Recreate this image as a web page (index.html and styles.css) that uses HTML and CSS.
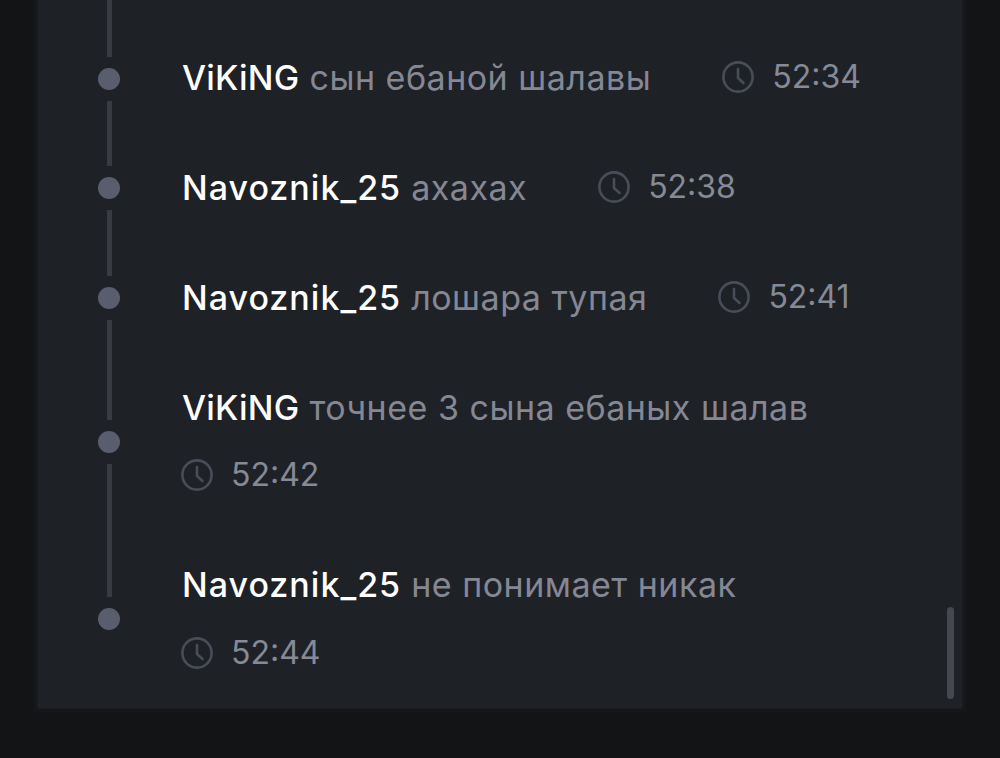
FILE: index.html
```html
<!DOCTYPE html>
<html lang="en">
<head>
    <meta charset="UTF-8">
    <meta name="viewport" content="width=device-width, initial-scale=1.0">
    <title>Chat log</title>
    <link rel="stylesheet" href="styles.css">
</head>
<body>
    <div class="panel">
        <div class="row row-first">
            <div class="marker"><span class="line"></span><span class="dot"></span><span class="line"></span></div>
            <div class="body">
                <div class="msg"><span class="name name-short">ViKiNG</span> сын ебаной шалавы</div>
                <div class="time time-inline">
                    <svg class="clock" viewBox="0 0 32 32"><circle cx="16" cy="16" r="14.6"/><path d="M16 8v9l5.5 5"/></svg>
                    <span>52:34</span>
                </div>
            </div>
        </div>
        <div class="row">
            <div class="marker"><span class="line"></span><span class="dot"></span><span class="line"></span></div>
            <div class="body">
                <div class="msg"><span class="name">Navoznik_25</span> ахахах</div>
                <div class="time time-inline">
                    <svg class="clock" viewBox="0 0 32 32"><circle cx="16" cy="16" r="14.6"/><path d="M16 8v9l5.5 5"/></svg>
                    <span>52:38</span>
                </div>
            </div>
        </div>
        <div class="row">
            <div class="marker"><span class="line"></span><span class="dot"></span><span class="line"></span></div>
            <div class="body">
                <div class="msg"><span class="name">Navoznik_25</span> лошара тупая</div>
                <div class="time time-inline">
                    <svg class="clock" viewBox="0 0 32 32"><circle cx="16" cy="16" r="14.6"/><path d="M16 8v9l5.5 5"/></svg>
                    <span>52:41</span>
                </div>
            </div>
        </div>
        <div class="row">
            <div class="marker"><span class="line"></span><span class="dot"></span><span class="line"></span></div>
            <div class="body">
                <div class="msg"><span class="name name-short">ViKiNG</span> точнее 3 сына ебаных шалав</div>
                <div class="time">
                    <svg class="clock" viewBox="0 0 32 32"><circle cx="16" cy="16" r="14.6"/><path d="M16 8v9l5.5 5"/></svg>
                    <span>52:42</span>
                </div>
            </div>
        </div>
        <div class="row row-last">
            <div class="marker"><span class="line"></span><span class="dot"></span><span class="line"></span></div>
            <div class="body">
                <div class="msg"><span class="name">Navoznik_25</span> не понимает никак</div>
                <div class="time">
                    <svg class="clock" viewBox="0 0 32 32"><circle cx="16" cy="16" r="14.6"/><path d="M16 8v9l5.5 5"/></svg>
                    <span>52:44</span>
                </div>
            </div>
        </div>
        <div class="scrollbar"></div>
    </div>
</body>
</html>
```

FILE: styles.css
```css
html, body {
    margin: 0;
    height: 758px;
    overflow: hidden;
    background-color: #131416;
}
body {
    font-family: Inter, "Noto Sans", sans-serif;
    font-size: 32px;
    line-height: 44px;
}
.panel {
    position: relative;
    box-sizing: border-box;
    width: 924px;
    height: 708px;
    margin-left: 38px;
    padding-left: 60px;
    background-color: #1e2126;
    box-shadow: 0 0 0 1px #1a1b1f, 0 0 0 4px #161719;
    overflow: hidden;
}
.row {
    display: flex;
    gap: 62px;
}
.marker {
    display: flex;
    flex-direction: column;
    align-items: center;
    width: 22px;
}
.line {
    flex: 1;
    width: 5px;
    background-color: #383b42;
}
.dot {
    flex: none;
    width: 22px;
    height: 22px;
    margin: 11px 0;
    border-radius: 50%;
    background-color: #585e6e;
}
.row-first .marker .line:first-child {
    flex: none;
    height: 57px;
}
.row-last .marker .line:last-child {
    visibility: hidden;
}
.body {
    display: flex;
    flex-wrap: wrap;
    align-items: center;
    flex: 1;
    column-gap: 72px;
    row-gap: 23.2px;
    padding: 33px 0;
    margin-right: 62px;
}
.row-first .body {
    padding-top: 56.3px;
}
.msg {
    color: #858894;
    font-size: 34px;
    letter-spacing: 0.5px;
}
.name {
    color: #fff;
    font-weight: 500;
    letter-spacing: 1px;
}
.name-short {
    letter-spacing: 0.2px;
}
.time {
    display: flex;
    align-items: center;
    gap: 18px;
    color: #858a96;
}
.time-inline {
    margin-top: -3px;
}
.clock {
    width: 32px;
    height: 32px;
    margin-left: -1px;
    fill: none;
    stroke: #494d57;
    stroke-width: 2.6;
    stroke-linecap: round;
    stroke-linejoin: round;
}
.scrollbar {
    position: absolute;
    left: 909px;
    top: 607px;
    width: 7px;
    height: 92px;
    border-radius: 4px;
    background-color: #45484e;
}
```
